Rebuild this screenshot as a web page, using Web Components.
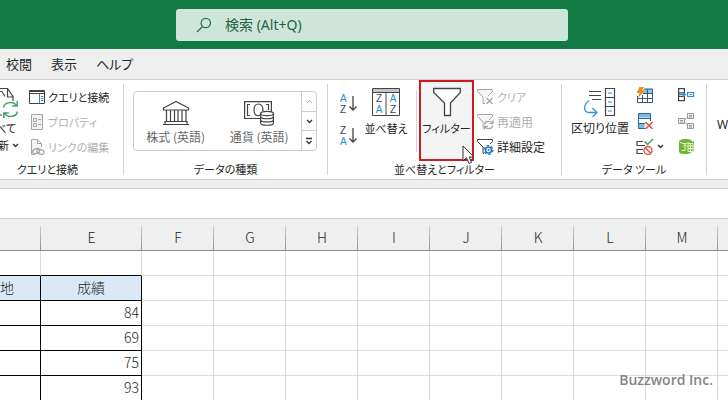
<!DOCTYPE html>
<html lang="ja">
<head>
<meta charset="utf-8">
<title>Excel</title>
<style>
    html, body { height: 100%; }

    body {
        margin: 0;
        overflow: hidden;
        background: #fff;
        color: #262626;
        font-family: "Noto Sans CJK JP", sans-serif;
        font-size: 12px;
        line-height: 16px;
        --clr-brand: #127a43;
        --clr-chrome: #efefef;
        --clr-line: #cdcdcd;
        --clr-disabled: #b0b0b0;
    }
</style>
</head>
<body>
<excel-window></excel-window>

<script>
const icons = {
    search: [16, 16, `
        <g fill="none" stroke="#2b6e4d" stroke-width="1.2"><circle cx="9.8" cy="6" r="4.7"/><path d="M6.5 9.5L1 15"/></g>`],
    chevron: [7, 5, `<path d="M1 1l2.5 2.5L6 1" fill="none" stroke="#333" stroke-width="1.3"/>`],
    up: [7, 5, `<path d="M1 4l2.5-2.5L6 4" fill="none" stroke="#b0b0b0"/>`],
    more: [8, 8, `<path d="M1 1.5h6M1.5 4L4 6.5L6.5 4" fill="none" stroke="#333" stroke-width="1.3"/>`],
    refresh: [19, 31, `
        <path d="M0 1.5h7.5l5.5 8V14M7.5 1.5V10H13M0 4.5h2l3 5M0 28h2" fill="none" stroke="#444" stroke-width="1.2"/>
        <path d="M3.5 20.5c1.2-6 10.5-6.5 13.2-1.5M17.2 14v5h-5M17.5 24.5c-1.2 6-10.5 6.5-13.2 1.5M3.8 31v-5h5" fill="none" stroke="#3fa267" stroke-width="1.5"/>`],
    queries: [16, 16, `
        <path d="M.5 1.5h15v13H.5z" fill="#fff" stroke="#444"/><path d="M.5 2.5h15M.5 4.500h15" stroke="#444"/>
        <path d="M10.5 5v9" stroke="#2a8dd4"/><path d="M12 7.5h2.5M12 9.5h2.5M12 11.5h2.5" stroke="#2a8dd4"/>`],
    properties: [16, 16, `
        <path d="M2.5.5h11v15h-11z" fill="#f1f1f1" stroke="#a6a6a6"/>
        <path d="M4.5 4.5h3v3h-3zM4.5 9.5h3v3h-3zM9 5.5h3M9 10.5h3" fill="none" stroke="#a6a6a6"/>`],
    links: [16, 16, `
        <path d="M5 15.5H2.5V.5h6l4 4V8M8.5.5v4h4" fill="#f4f4f4" stroke="#a6a6a6"/>
        <g fill="none" stroke="#a6a6a6" stroke-width="1.3"><rect x="3.5" y="10" width="7" height="4.500" rx="2.2" transform="rotate(-20 7 12)"/><rect x="8" y="10.5" width="7" height="4.5" rx="2.2" transform="rotate(15 11 13)"/></g>`],
    bank: [28, 26, `
        <path d="M1.5 10V8L14 1.5L26.5 8v2zM4.5 10v11M8.5 10v11M12.5 10v11M16 10v11M20 10v11M24 10v11M3 21.5h22M1 24.5h26M3 21v3.5M25 21v3.5" fill="none" stroke="#444" stroke-width="1.2"/>`],
    currency: [30, 26, `
        <g fill="none" stroke="#444" stroke-width="1.2">
            <path d="M16 18.5H.6V1.6h26.8V12M6 4.5H3.5v11H6M22 4.5h2.5V10"/>
            <path d="M16 15c-4 2-6-1-6-5s2-6 4.500-6s4.500 2 4.500 7"/>
        </g>
        <g fill="#fff" stroke="#444" stroke-width="1.2">
            <path d="M16.6 13.5v9.5c0 3 12.8 3 12.8 0v-9.5"/><ellipse cx="23" cy="13.5" rx="6.4" ry="2.2"/>
            <path d="M16.6 16.5c0 3 12.8 3 12.8 0M16.6 19.7c0 3 12.8 3 12.8 0" fill="none"/>
        </g>`],
    sortAsc: [18, 22, `
        <text x="0" y="9" fill="#2a8dd4">A</text><text x="0" y="20" fill="#444">Z</text>
        <path d="M13 3v14M9.5 13.5L13 17l3.5-3.5" fill="none" stroke="#444" stroke-width="1.3"/>`],
    sortDesc: [18, 22, `
        <text x="0" y="9" fill="#444">Z</text><text x="0" y="20" fill="#2a8dd4">A</text>
        <path d="M13 3v14M9.5 13.5L13 17l3.500-3.5" fill="none" stroke="#444" stroke-width="1.3"/>`],
    sort: [28, 30, `
        <path d="M.5 1.5h27v27H.5z" fill="#fff" stroke="#444"/><path d="M1 2h26v3H1z" fill="#c4c4c4"/>
        <path d="M.5 5.5h27M14 5v23" stroke="#444"/>
        <g text-anchor="middle"><text x="7" y="15" fill="#444">Z</text><text x="7" y="26" fill="#2a8dd4">A</text>
        <text x="21" y="15" fill="#2a8dd4">A</text><text x="21" y="26" fill="#444">Z</text></g>`],
    filter: [28, 30, `<path d="M.7 1.5h26.6v4L17.5 16v12.5h-6V16L.7 5.5z" fill="#fff" stroke="#444" stroke-width="1.3"/>`],
    clear: [17, 16, `
        <path d="M8 14.5H6V8L.5 2.5v-2h15v2L11 7" fill="#f5f5f5" stroke="#a6a6a6"/>
        <path d="M9.5 9l6 6M15.5 9l-6 6" stroke="#a6a6a6" stroke-width="1.3"/>`],
    reapply: [17, 16, `
        <path d="M6 14.5V8L.5 2.5v-2h15v2L12 6" fill="#f5f5f5" stroke="#a6a6a6"/>
        <path d="M7.5 10.5c1-4 7-4 8-1M16 6v3.5h-3.5M16 11.5c-1 4-7 4-8 1M7.5 15.8v-3.5H11" fill="none" stroke="#a6a6a6" stroke-width="1.2"/>`],
    advanced: [17, 16, `
        <path d="M7 14.5H6V8L.5 2.5v-2h15v2L13 5" fill="#fff" stroke="#444"/>
        <circle cx="11.5" cy="11" r="3" fill="#fff" stroke="#2478bd" stroke-width="1.6"/>
        <circle cx="11.5" cy="11" r="4.400" fill="none" stroke="#2478bd" stroke-width="1.4" stroke-dasharray="2.3 2.3"/>
        <circle cx="11.5" cy="11" r="1" fill="#2478bd"/>`],
    columns: [32, 30, `
        <path d="M5 4.5h12M5 8.5h12M8 12.5h9" stroke="#444" stroke-width="1.2"/>
        <path d="M21.5 1.5h9v27h-9zM21.5 10.5h9M21.5 19.5h9" fill="#fff" stroke="#444" stroke-width="1.2"/>
        <path d="M24 6h4M24 15h4M24 24h4" stroke="#2a8dd4"/>
        <path d="M5 13.5C-1 18-1 26 6 25.5h6M8.5 21l4.5 4.5L8.5 30" fill="none" stroke="#3a91cf" stroke-width="1.3"/>`],
    flash: [18, 16, `
        <path d="M4 6l5-4h7.5v7H4z" fill="#8cc2ec"/>
        <path d="M2 6h15v9.5H2z" fill="#fff"/><path d="M7 2.5h4.5v4H7z" fill="#8cc2ec"/>
        <path d="M8 2h8.5v13.5h-15V9M1.5 11.5h15M7 6.5h9.5M6.5 8v7M11.5 2v13" fill="none" stroke="#3b5a74"/>
        <path d="M3.5 0H8L6 3.5h3L2 11l1.500-5H.5z" fill="#ef8b1d"/>`],
    duplicates: [18, 16, `
        <path d="M2.5.5h12v4h-12zM2.5 10.500h6v5h-6z" fill="#7db9e8"/>
        <path d="M9 15.5H2.5V.5h12V8M2.5 5.5h12M2.5 10.5H9" fill="none" stroke="#2b6596"/>
        <path d="M9.5 9l7 7M16.5 9l-7 7" stroke="#e0504a" stroke-width="1.5"/>`],
    validation: [18, 16, `
        <path d="M7 2.5H1v4h8M7 10.5H1v4h6" fill="none" stroke="#444" stroke-width="1.2"/>
        <path d="M8.5 2.5l3 3L17 0" fill="none" stroke="#3fa267" stroke-width="1.5"/>
        <circle cx="12" cy="11.5" r="4" fill="#fff" stroke="#e0504a" stroke-width="1.4"/><path d="M9.5 9l5 5" stroke="#e0504a" stroke-width="1.4"/>`],
    consolidate: [17, 16, `
        <path d="M.6 1.6h5.8v4.2H.6zM.6 9.4h5.8v4.2H.6zM.6 5.8v3.6" fill="#fff" stroke="#444" stroke-width="1.2"/>
        <path d="M1 7.5h6M5 5.5l2.5 2L5 9.5" fill="none" stroke="#2a8dd4" stroke-width="1.2"/>
        <path d="M9.6 5.5h6v4h-6z" fill="#fff" stroke="#2a8dd4" stroke-width="1.2"/><path d="M11.5 7.5h2.5" stroke="#2a8dd4"/>`],
    relations: [17, 16, `
        <g fill="#f0f0f0" stroke="#999"><path d="M.5 5.5h6v5h-6zM9.5.5h6v5h-6zM9.5 10.5h6v5h-6z"/>
        <path d="M2 7.5h3M2 9h3M11 2.5h3M11 4h3M11 12.5h3M11 14h3M6.5 7L9.5 4M6.5 9l3 3"/></g>`],
    model: [17, 17, `
        <path d="M1 3.5C1 0 14 0 14 3.5h2v10h-2C12 17 1 17 1 13.5z" fill="#6fb52c"/>
        <path d="M1.5 4c2 2 7 2 9 .5M3.5 12.5H7v-6M5 8.5l2-2l2 2M10 5.5h5v8h-5zM10 8h5M10 10.5h5M12.5 5.5v8" fill="none" stroke="#e9f6dc"/>`],
    pointer: [13, 20, `<path d="M1 1v15l3.5-3.3L7 18.5l2.5-1L7.2 12H12z" fill="#fff" stroke="#333"/>`]
};

class uiIcon extends HTMLElement {
    constructor() {
        super();
        this.attachShadow({ mode: 'open' });
    }

    connectedCallback() {
        const [width, height, body] = icons[this.getAttribute('name')];

        this.shadowRoot.innerHTML = `
        <style>
            :host {
                display: block;
                flex: none;
            }

            svg {
                display: block;
                font: 10px "Liberation Sans", sans-serif;
            }
        </style>
            <svg width="${width}" height="${height}" viewBox="0 0 ${width} ${height}" aria-hidden="true">${body}</svg>
        `;
    }
}

class titleBar extends HTMLElement {
    constructor() {
        super();
        this.attachShadow({ mode: 'open' });

        this.shadowRoot.innerHTML = `
        <style>
            :host {
                display: flex;
                padding: 9px 160px 8px 176px;
                background: var(--clr-brand);
            }

            label {
                flex: 1;
                display: flex;
                align-items: center;
                gap: 13px;
                height: 32px;
                padding-left: 20px;
                border-radius: 3px;
                background: #cee6da;
            }

            input {
                flex: 1;
                min-width: 0;
                padding: 0;
                border: 0;
                outline: 0;
                background: none;
                color: #1c6343;
                font: 14px/20px "Noto Sans", "Noto Sans CJK JP", sans-serif;
            }

            input::placeholder {
                color: inherit;
                opacity: 1;
            }
        </style>
            <label>
                <ui-icon name="search"></ui-icon>
                <input type="text" placeholder="検索 (Alt+Q)" aria-label="検索">
            </label>
        `;
    }
}

class ribbonTabs extends HTMLElement {
    constructor() {
        super();
        this.attachShadow({ mode: 'open' });

        this.shadowRoot.innerHTML = `
        <style>
            :host {
                display: block;
                background: var(--clr-chrome);
                border-bottom: 1px solid var(--clr-line);
            }

            nav {
                display: flex;
                gap: 19px;
                padding: 5px 6px;
            }

            a {
                color: inherit;
                font-size: 13px;
                line-height: 20px;
                font-feature-settings: "palt";
                text-decoration: none;
            }
        </style>
            <nav>
                <a href="#review">校閲</a>
                <a href="#view">表示</a>
                <a href="#help">ヘルプ</a>
            </nav>
        `;
    }
}

class ribbonGroup extends HTMLElement {
    constructor() {
        super();
        this.attachShadow({ mode: 'open' });

        this.shadowRoot.innerHTML = `
        <style>
            :host {
                display: flex;
                flex-direction: column;
                flex: none;
                box-sizing: border-box;
                margin: 4px 0;
                border-right: 1px solid #d4d4d4;
            }

            :host(:last-of-type) {
                flex: 1;
                min-width: 0;
                border-right: 0;
            }

            .items {
                display: flex;
                height: 79px;
            }

            .label {
                height: 12px;
                line-height: 12px;
                padding-right: var(--label-shift, 0);
                font-size: 11px;
                font-feature-settings: "palt";
                text-align: center;
                white-space: nowrap;
            }
        </style>
            <div class="items"><slot></slot></div>
            <div class="label"></div>
        `;
    }

    connectedCallback() {
        this.shadowRoot.querySelector('.label').textContent = this.getAttribute('label');
    }
}

class ribbonButton extends HTMLElement {
    constructor() {
        super();
        this.attachShadow({ mode: 'open' });

        this.shadowRoot.innerHTML = `
        <style>
            :host {
                display: block;
                flex: none;
            }

            :host([kana]) {
                font-size: 11px;
            }

            button {
                display: flex;
                align-items: center;
                gap: 3px;
                width: 100%;
                height: 25px;
                padding: 0;
                border: 0;
                background: none;
                color: inherit;
                font: inherit;
                font-feature-settings: "palt";
                white-space: nowrap;
            }

            button:disabled {
                color: var(--clr-disabled);
            }

            :host([size="large"]) button {
                flex-direction: column;
                height: auto;
                padding-top: 3px;
            }

            :host([clipped]) {
                overflow: hidden;
            }

            :host([clipped]) button {
                align-items: flex-end;
            }
        </style>
            <button type="button"><slot name="icon"></slot><slot></slot></button>
        `;
    }

    connectedCallback() {
        const button = this.shadowRoot.querySelector('button');
        button.disabled = this.hasAttribute('disabled');

        if (this.hasAttribute('label')) {
            button.setAttribute('aria-label', this.getAttribute('label'));
        }
    }
}

class dataGallery extends HTMLElement {
    constructor() {
        super();
        this.attachShadow({ mode: 'open' });

        this.shadowRoot.innerHTML = `
        <style>
            :host {
                display: flex;
                flex: 1;
                height: 58px;
                margin: 7px 10px 0 9px;
                border: 1px solid var(--clr-line);
                border-radius: 4px;
            }

            .types {
                flex: 1;
                display: flex;
            }

            .types button {
                flex: 1;
                display: flex;
                flex-direction: column;
                align-items: center;
                gap: 3px;
                padding: 8px 0 0;
                color: #666;
                white-space: nowrap;
            }

            button {
                border: 0;
                background: none;
                font: inherit;
            }

            .scroll {
                display: flex;
                flex-direction: column;
                width: 14px;
                border-left: 1px solid var(--clr-line);
            }

            .scroll button {
                flex: 1;
                display: flex;
                align-items: center;
                justify-content: center;
                padding: 0;
            }

            .scroll button + button {
                border-top: 1px solid var(--clr-line);
            }
        </style>
            <div class="types">
                <button type="button"><ui-icon name="bank"></ui-icon>株式 (英語)</button>
                <button type="button"><ui-icon name="currency"></ui-icon>通貨 (英語)</button>
            </div>
            <div class="scroll">
                <button type="button" aria-label="前へ" disabled><ui-icon name="up"></ui-icon></button>
                <button type="button" aria-label="次へ"><ui-icon name="chevron"></ui-icon></button>
                <button type="button" aria-label="その他"><ui-icon name="more"></ui-icon></button>
            </div>
        `;
    }
}

class excelRibbon extends HTMLElement {
    constructor() {
        super();
        this.attachShadow({ mode: 'open' });

        this.shadowRoot.innerHTML = `
        <style>
            :host {
                display: flex;
                overflow: hidden;
                background: #fff;
                border-bottom: 1px solid var(--clr-line);
            }

            .connections { width: 124px; --label-shift: 28px; }
            .types { width: 204px; }
            .sorting { width: 234px; }
            .tools { width: 145px; }

            .stack {
                display: flex;
                flex-direction: column;
            }

            .refresh { width: 19px; margin-right: 10px; }
            .refresh span { padding-right: 3px; line-height: 14px; }
            .refresh .more { display: flex; align-items: center; gap: 3px; padding-right: 0; }

            .order { gap: 7px; padding: 7px 2px 0 12px; }
            .order ribbon-button { width: 18px; }

            .sort { width: 52px; }

            .divider {
                width: 1px;
                height: 62px;
                margin: 6px 2px 0 4px;
                background: #d4d4d4;
            }

            /* the highlighted command reaches up to the ribbon edge */
            .filter {
                position: relative;
                box-sizing: border-box;
                width: 55px;
                height: 81px;
                margin: -4px 3px 0 0;
                padding-top: 2px;
                border: 2px solid #cf1b1f;
                background: #f4f4f4;
            }

            .pointer {
                position: absolute;
                left: 41px;
                top: 63px;
            }

            .columns { width: 60px; margin: 0 6px 0 8px; }
            .pairs { display: grid; grid-template-columns: 42px 17px; grid-auto-rows: 26px; margin-top: -2px; }
            .whatif { margin-left: 10px; }
            .whatif span { padding-top: 30px; font-family: "Noto Sans", sans-serif; }
        </style>
            <ribbon-group class="connections" label="クエリと接続">
                <ribbon-button class="refresh" size="large" kana clipped>
                    <ui-icon slot="icon" name="refresh"></ui-icon>
                    <span>べて</span>
                    <span class="more">新<ui-icon name="chevron"></ui-icon></span>
                </ribbon-button>
                <div class="stack">
                    <ribbon-button kana><ui-icon slot="icon" name="queries"></ui-icon>クエリと接続</ribbon-button>
                    <ribbon-button kana disabled><ui-icon slot="icon" name="properties"></ui-icon>プロパティ</ribbon-button>
                    <ribbon-button kana disabled><ui-icon slot="icon" name="links"></ui-icon>リンクの編集</ribbon-button>
                </div>
            </ribbon-group>

            <ribbon-group class="types" label="データの種類">
                <data-gallery></data-gallery>
            </ribbon-group>

            <ribbon-group class="sorting" label="並べ替えとフィルター">
                <div class="stack order">
                    <ribbon-button label="昇順"><ui-icon slot="icon" name="sortAsc"></ui-icon></ribbon-button>
                    <ribbon-button label="降順"><ui-icon slot="icon" name="sortDesc"></ui-icon></ribbon-button>
                </div>
                <ribbon-button class="sort" size="large" kana><ui-icon slot="icon" name="sort"></ui-icon>並べ替え</ribbon-button>
                <div class="divider"></div>
                <ribbon-button class="filter" size="large" kana>
                    <ui-icon slot="icon" name="filter"></ui-icon>フィルター
                    <ui-icon class="pointer" name="pointer"></ui-icon>
                </ribbon-button>
                <div class="stack">
                    <ribbon-button kana disabled><ui-icon slot="icon" name="clear"></ui-icon>クリア</ribbon-button>
                    <ribbon-button disabled><ui-icon slot="icon" name="reapply"></ui-icon>再適用</ribbon-button>
                    <ribbon-button><ui-icon slot="icon" name="advanced"></ui-icon>詳細設定</ribbon-button>
                </div>
            </ribbon-group>

            <ribbon-group class="tools" label="データ ツール">
                <ribbon-button class="columns" size="large"><ui-icon slot="icon" name="columns"></ui-icon>区切り位置</ribbon-button>
                <div class="pairs">
                    <ribbon-button label="フラッシュ フィル"><ui-icon slot="icon" name="flash"></ui-icon></ribbon-button>
                    <ribbon-button label="統合"><ui-icon slot="icon" name="consolidate"></ui-icon></ribbon-button>
                    <ribbon-button label="重複の削除"><ui-icon slot="icon" name="duplicates"></ui-icon></ribbon-button>
                    <ribbon-button label="リレーションシップ" disabled><ui-icon slot="icon" name="relations"></ui-icon></ribbon-button>
                    <ribbon-button label="データの入力規則"><ui-icon slot="icon" name="validation"></ui-icon><ui-icon name="chevron"></ui-icon></ribbon-button>
                    <ribbon-button label="データ モデル"><ui-icon slot="icon" name="model"></ui-icon></ribbon-button>
                </div>
            </ribbon-group>

            <ribbon-group label="">
                <ribbon-button class="whatif" size="large"><span>W</span></ribbon-button>
            </ribbon-group>
        `;
    }
}

class sheetGrid extends HTMLElement {
    constructor() {
        super();
        this.attachShadow({ mode: 'open' });

        const columns = ['', 'E', 'F', 'G', 'H', 'I', 'J', 'K', 'L', 'M', ''];
        const rows = [[], ['地', '成績'], ['', '84'], ['', '69'], ['', '75'], ['', '93']];

        const head = columns.map(name => `<th scope="col">${name}</th>`).join('');
        const body = rows.map(row => `<tr>${columns.map((name, i) => `<td>${row[i] || ''}</td>`).join('')}</tr>`).join('');

        this.shadowRoot.innerHTML = `
        <style>
            :host {
                display: block;
                font-size: 14px;
                line-height: 20px;
                font-weight: 300;
            }

            table {
                width: 100%;
                table-layout: fixed;
                border-collapse: separate;
                border-spacing: 0;
            }

            col { width: 72px; }
            col:first-child { width: 41px; }
            col:nth-child(2) { width: 101px; }
            col:last-child { width: auto; }

            th, td {
                box-sizing: border-box;
                height: 25px;
                padding: 0 0 2px;
                border-right: 1px solid #dcdcdc;
                border-bottom: 1px solid #dcdcdc;
            }

            th {
                height: 32px;
                padding: 5px 0 0;
                border-right: 0;
                border-bottom-color: #8e8e8e;
                background: linear-gradient(#cfcfcf, #8e8e8e) right bottom / 1px 24px no-repeat var(--clr-chrome);
                font-weight: inherit;
            }

            th:last-child {
                background: var(--clr-chrome);
            }

            td:last-child {
                border-right: 0;
            }

            td:nth-child(2) {
                padding-right: 2px;
                text-align: right;
            }

            td:nth-child(-n+2) {
                border-bottom-color: #000;
            }

            tr:nth-child(n+2) td:nth-child(-n+2) {
                border-right-color: #000;
            }

            tr:nth-child(2) td:nth-child(-n+2) {
                background: #dbe9f6;
            }

            tr:nth-child(2) td:nth-child(2) {
                padding-right: 0;
                text-align: center;
            }
        </style>
            <table>
                <colgroup>${'<col>'.repeat(columns.length)}</colgroup>
                <thead><tr>${head}</tr></thead>
                <tbody>${body}</tbody>
            </table>
        `;
    }
}

class excelWindow extends HTMLElement {
    constructor() {
        super();
        this.attachShadow({ mode: 'open' });

        this.shadowRoot.innerHTML = `
        <style>
            :host {
                display: flex;
                flex-direction: column;
                position: relative;
                height: 100%;
                overflow: hidden;
            }

            :host > * {
                flex: none;
            }

            .formula {
                height: 29px;
                margin-top: 8px;
                border: solid var(--clr-line);
                border-width: 1px 0;
                box-shadow: 0 -8px var(--clr-chrome);
            }

            .credit {
                position: absolute;
                right: 15px;
                bottom: 10px;
                color: #848484;
                font: 600 14px/20px "Open Sans", sans-serif;
            }
        </style>
            <title-bar></title-bar>
            <ribbon-tabs></ribbon-tabs>
            <excel-ribbon></excel-ribbon>
            <div class="formula"></div>
            <sheet-grid></sheet-grid>
            <div class="credit">Buzzword Inc.</div>
        `;
    }
}

window.customElements.define('ui-icon', uiIcon);
window.customElements.define('title-bar', titleBar);
window.customElements.define('ribbon-tabs', ribbonTabs);
window.customElements.define('ribbon-group', ribbonGroup);
window.customElements.define('ribbon-button', ribbonButton);
window.customElements.define('data-gallery', dataGallery);
window.customElements.define('excel-ribbon', excelRibbon);
window.customElements.define('sheet-grid', sheetGrid);
window.customElements.define('excel-window', excelWindow);
</script>
</body>
</html>
